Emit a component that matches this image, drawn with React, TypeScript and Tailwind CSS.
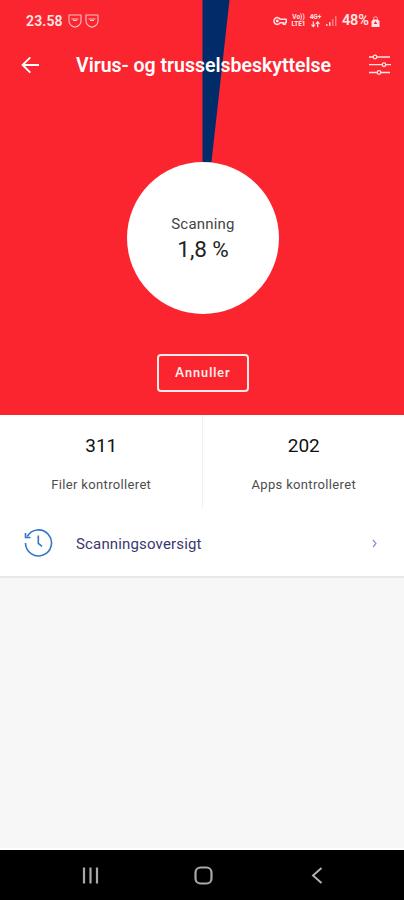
import React from "react";

function Shield() {
  return (
    <svg width="14" height="14" viewBox="0 0 14 14" fill="none" stroke="#ffc4c6" strokeWidth="1.1">
      <path d="M1 1h12v6.2c0 3.1-2.5 4.900-6 6.100-3.500-1.200-6-3-6-6.100z" strokeLinejoin="round" />
      <path d="M3.500 5h7M5 6.500h4" />
    </svg>
  );
}

function StatusBar() {
  return (
    <div className="flex h-[41px] items-center pl-[26px] pr-[24px] text-[#ffe6e6]">
      <span className="w-[37px] whitespace-nowrap text-[14px] font-semibold leading-none tracking-[0.15px]">23.58</span>
      <div className="ml-[5px] flex gap-[3px] pt-px">
        <Shield />
        <Shield />
      </div>
      <div className="ml-auto flex items-center">
        <svg width="14" height="10" viewBox="0 0 14 10" fill="none" stroke="#ffe0e1" strokeWidth="1.500">
          <path d="M7.300 3.300A3.400 3.400 0 1 0 7.300 6.700h3v1.500h2V6.500h1V3.300z" strokeLinejoin="round" />
          <circle cx="4.300" cy="5" r=".7" />
        </svg>
        <div className="ml-[4px] w-[15px] text-center text-[6.5px] font-bold leading-[7px]">
          <div className="whitespace-nowrap">Vo))</div>
          <div className="whitespace-nowrap">LTE1</div>
        </div>
        <div className="ml-[3px] flex w-[13px] flex-col items-center text-[6.5px] font-bold leading-[7px]">
          <div className="whitespace-nowrap">4G+</div>
          <svg width="9" height="7" viewBox="0 0 9 7" fill="none" stroke="#ffe6e6" strokeWidth="1.200">
            <path d="M2.300.5v5M.5 3.700l1.800 2 1.800-2M6.700 6.200V1M4.900 2.800l1.800-2 1.800 2" />
          </svg>
        </div>
        <svg className="ml-[4px]" width="11" height="11" viewBox="0 0 11 11" fill="#ffd0d2">
          <path d="M0 9h1.500v2H0zM3 7h1.500v4H3z" />
          <path d="M6 4h1.500v7H6zM9 1h1.500v10H9z" opacity=".5" />
        </svg>
        <span className="ml-[5px] w-[29px] whitespace-nowrap pt-[2px] text-[14.5px] font-semibold leading-none tracking-[-0.2px]">48%</span>
        <svg width="9" height="12" viewBox="0 0 9 12" className="mt-[2px]">
          <path d="M2.500 4V2.700a2 2 0 0 1 4 0V4" fill="none" stroke="#ffa9ac" strokeWidth="1" />
          <path d="M.5 5 2.500 3.500h4l2 1.500v6h-8z" fill="#ffe6e6" />
          <path d="m4.500 5-1.700 3h3.400z" fill="#fb2530" />
        </svg>
      </div>
    </div>
  );
}

function Header() {
  return (
    <div className="flex h-[48px] items-center pl-[21px] pr-[13px]">
      <svg width="19" height="18" viewBox="0 0 19 18" fill="none" stroke="white" strokeWidth="1.900">
        <path d="M18 9H2M9.300 1.300 1.600 9l7.700 7.700" />
      </svg>
      <h1 className="ml-[36px] whitespace-nowrap pt-[2px] text-[19.5px] font-semibold leading-none tracking-[-0.01px] text-white">
        Virus- og trusselsbeskyttelse
      </h1>
      <svg className="ml-auto" width="22" height="22" viewBox="0 0 22 22" fill="none" stroke="#ffe3e4" strokeWidth="1.300">
        <path d="M0 3h4.200M7.800 3H21M0 10.700h13.200M16.800 10.700H22M0 18.500h8.200M11.800 18.500H21" />
        <circle cx="6" cy="3" r="1.800" />
        <circle cx="15" cy="10.700" r="1.800" />
        <circle cx="10" cy="18.500" r="1.800" />
      </svg>
    </div>
  );
}

function Stat({ value, label }: { value: string; label: string }) {
  return (
    <div className="flex flex-1 flex-col items-center pl-px pt-[21px]">
      <span className="text-[19px] leading-[20px] text-[#111]">{value}</span>
      <span className="mt-[21px] text-[13px] leading-[16px] tracking-[0.34px] text-[#4d4d4d]">{label}</span>
    </div>
  );
}

export default function App() {
  return (
    <div className="flex h-[900px] w-[404px] flex-col overflow-hidden bg-[#f7f7f7] font-[Roboto,sans-serif]">
      <section className="relative h-[415px] shrink-0 bg-[#fb2530]">
        <svg className="absolute left-0 top-0" width="404" height="240" viewBox="0 0 404 240">
          <path d="M202.500 0H229.500L203 238h-.5z" fill="#022b69" />
        </svg>
        <div className="relative flex flex-col">
          <StatusBar />
          <Header />
          <div className="ml-[127px] mt-[73px] flex h-[152px] w-[152px] flex-col items-center rounded-full bg-white pt-[52px]">
            <span className="text-[15px] leading-[20px] tracking-[0.2px] text-[#444]">Scanning</span>
            <span className="mt-[2px] text-[22.5px] leading-[26px] tracking-[-0.1px] text-[#222]">1,8 %</span>
          </div>
          <button className="ml-[157px] mt-[40px] h-[38px] w-[92px] rounded-[4px] border-2 border-[#ffe9e9] pt-px text-[12.5px] font-bold tracking-[1px] text-[#fff0f0] [font-family:Lato,sans-serif]">
            Annuller
          </button>
        </div>
      </section>
      <section className="flex h-[95px] shrink-0 bg-white">
        <Stat value="311" label="Filer kontrolleret" />
        <div className="h-[93px] w-px bg-[#f1f1f1]" />
        <Stat value="202" label="Apps kontrolleret" />
      </section>
      <section className="flex h-[68px] shrink-0 items-center border-b-2 border-[#e8e8e8] bg-white pl-[24px] pr-[26px]">
        <svg width="29" height="29" viewBox="0 0 29 29" fill="none" stroke="#3474ce" strokeWidth="1.600">
          <path d="M3.200 7.500A13 13 0 1 1 1.500 14" />
          <path d="M1.500 4v4.500h5M14.300 6.500v7.800l3.700 3" />
        </svg>
        <span className="ml-[23px] pt-[2px] text-[15px] leading-[20px] tracking-[0.16px] text-[#38386f]">Scanningsoversigt</span>
        <svg className="ml-auto" width="6" height="9" viewBox="0 0 6 9" fill="none" stroke="#8c8cd8" strokeWidth="1.200">
          <path d="m1 1 3 3.500-3 3.500" />
        </svg>
      </section>
      <main className="flex-1 border-b-2 border-white" />
      <nav className="flex h-[50px] shrink-0 items-center bg-black pl-[82px]">
        <svg width="17" height="17" viewBox="0 0 17 17" stroke="#a9a9a9" strokeWidth="2.200">
          <path d="M2 .5v16M8.500.5v16M15 .5v16" />
        </svg>
        <svg className="ml-[95px]" width="19" height="19" viewBox="0 0 19 19" fill="none" stroke="#a9a9a9" strokeWidth="2.200">
          <rect x="1.500" y="1.500" width="16" height="16" rx="5" />
        </svg>
        <svg className="ml-[98px]" width="12" height="17" viewBox="0 0 12 17" fill="none" stroke="#b4b4b4" strokeWidth="1.900">
          <path d="m10.500 1-8.500 7.500 8.500 7.500" />
        </svg>
      </nav>
    </div>
  );
}
